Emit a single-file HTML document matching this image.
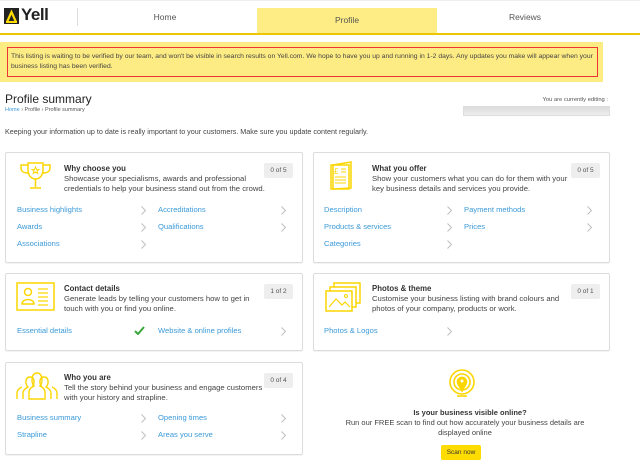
<!DOCTYPE html>
<html><head><meta charset="utf-8"><style>
*{box-sizing:border-box;margin:0;padding:0}
body{width:640px;height:466px;overflow:hidden;background:#fff;font-family:"Liberation Sans",sans-serif;color:#333;position:relative}
.a{position:absolute}
.card{position:absolute;border:1px solid #ddd;border-radius:2px;background:#fff;box-shadow:0 1px 1px rgba(0,0,0,.05)}
.t{position:absolute;left:58px;font-size:7.8px;font-weight:bold;color:#333}
.d{position:absolute;left:58px;font-size:7.7px;line-height:10px;color:#444}
.b{position:absolute;right:9px;top:10px;width:29px;height:15px;background:#eee;font-size:6.5px;color:#555;text-align:center;line-height:15px;border-radius:2px}
.l{position:absolute;font-size:7.6px;color:#3a9ad9}
.c{position:absolute;width:5px;height:9px}
</style></head><body>
<svg width="0" height="0" style="position:absolute"><defs><symbol id="ch" viewBox="0 0 5 9"><path d="M0.5 0.5L4.5 4.5L0.5 8.5" stroke="#bbb" stroke-width="0.9" fill="none"/></symbol></defs></svg>
<div class="a" style="left:0;top:0;width:640px;height:1px;background:#eee"></div>
<div class="a" style="left:4px;top:8px;width:15px;height:16px;background:#222"></div>
<svg class="a" style="left:4px;top:8px" width="15" height="16"><path d="M3 14 L7.5 4 L12 14" stroke="#ffdc00" stroke-width="2.2" fill="none"/><rect x="2" y="13" width="11" height="2" fill="#ffdc00"/></svg>
<div class="a" style="left:21px;top:5px;font-size:17px;font-weight:bold;color:#222;letter-spacing:-.5px">Yell</div>
<div class="a" style="left:77px;top:8px;width:1px;height:18px;background:#ddd"></div>
<div class="a" style="left:130px;top:12px;width:70px;text-align:center;font-size:8.5px;color:#555">Home</div>
<div class="a" style="left:257px;top:8px;width:180px;height:26px;background:#fded84"></div>
<div class="a" style="left:257px;top:15px;width:180px;text-align:center;font-size:8.5px;color:#555">Profile</div>
<div class="a" style="left:490px;top:12px;width:70px;text-align:center;font-size:8.5px;color:#555">Reviews</div>
<div class="a" style="left:0;top:33px;width:640px;height:2px;background:#ecc600"></div>
<div class="a" style="left:0;top:42px;width:603px;height:40px;background:#fdeb83"></div>
<div class="a" style="left:7px;top:47px;width:591px;height:30px;border:1px solid #e33;padding:4px 3px;font-size:6.8px;line-height:10px;color:#444">This listing is waiting to be verified by our team, and won't be visible in search results on Yell.com. We hope to have you up and running in 1-2 days. Any updates you make will appear when your business listing has been verified.</div>
<div class="a" style="left:5px;top:92px;font-size:12px;color:#222">Profile summary</div>
<div class="a" style="left:5px;top:107px;font-size:5.5px;color:#555"><span style="color:#3a9ad9">Home</span> › Profile › Profile summary</div>
<div class="a" style="right:32px;top:97px;font-size:5.8px;color:#555">You are currently editing :</div>
<div class="a" style="left:463px;top:106px;width:147px;height:10px;background:linear-gradient(#ddd,#eee);border:1px solid #ddd"></div>
<div class="a" style="left:5px;top:127px;font-size:7.2px;color:#444">Keeping your information up to date is really important to your customers. Make sure you update content regularly.</div>

<div class="card" style="left:5px;top:152px;width:298px;height:111px">
<svg class="a" style="left:13px;top:9px" width="33" height="28" fill="none" stroke="#fcd600" stroke-width="1.5"><path d="M9 1H24V8C24 14 20 17 16.5 17C13 17 9 14 9 8Z"/><path d="M9 3H2V6C2 10 6 11 9 11M24 3H31V6C31 10 27 11 24 11M16.5 17V25M11 26H22"/><path d="M16.5 5L17.5 7.5L20 7.6L18 9L18.8 11.5L16.5 10L14.2 11.5L15 9L13 7.6L15.5 7.5Z" stroke-width="1"/></svg>
<div class="t" style="top:11px">Why choose you</div>
<div class="d" style="top:21px">Showcase your specialisms, awards and professional<br>credentials to help your business stand out from the crowd.</div>
<div class="b">0 of 5</div>
<div class="l" style="left:11px;top:52px">Business highlights</div><svg class="c" style="left:135px;top:53px"><use href="#ch"/></svg>
<div class="l" style="left:152px;top:52px">Accreditations</div><svg class="c" style="left:275px;top:53px"><use href="#ch"/></svg>
<div class="l" style="left:11px;top:69px">Awards</div><svg class="c" style="left:135px;top:70px"><use href="#ch"/></svg>
<div class="l" style="left:152px;top:69px">Qualifications</div><svg class="c" style="left:275px;top:70px"><use href="#ch"/></svg>
<div class="l" style="left:11px;top:86px">Associations</div><svg class="c" style="left:135px;top:87px"><use href="#ch"/></svg>
</div>

<div class="card" style="left:313px;top:152px;width:297px;height:111px">
<svg class="a" style="left:15px;top:8px" width="28" height="30" fill="none" stroke="#fcd600" stroke-width="1.5"><path d="M4 4L22 1V27L4 28Z"/><path d="M2 4H20V28H2Z"/><path d="M6 16H17M6 19H17M6 22H17M12 8H17M12 11H17" stroke-width="1"/><text x="5" y="13" font-size="8" fill="#fcd600" stroke="none" font-family="Liberation Sans">£</text></svg>
<div class="t" style="top:11px">What you offer</div>
<div class="d" style="top:21px">Show your customers what you can do for them with your<br>key business details and services you provide.</div>
<div class="b">0 of 5</div>
<div class="l" style="left:10px;top:52px">Description</div><svg class="c" style="left:133px;top:53px"><use href="#ch"/></svg>
<div class="l" style="left:150px;top:52px">Payment methods</div><svg class="c" style="left:273px;top:53px"><use href="#ch"/></svg>
<div class="l" style="left:10px;top:69px">Products &amp; services</div><svg class="c" style="left:133px;top:70px"><use href="#ch"/></svg>
<div class="l" style="left:150px;top:69px">Prices</div><svg class="c" style="left:273px;top:70px"><use href="#ch"/></svg>
<div class="l" style="left:10px;top:86px">Categories</div><svg class="c" style="left:133px;top:87px"><use href="#ch"/></svg>
</div>

<div class="card" style="left:5px;top:273px;width:298px;height:78px">
<svg class="a" style="left:10px;top:8px" width="39" height="30" fill="none" stroke="#fcd600" stroke-width="1.5"><rect x="1" y="1" width="37" height="27"/><circle cx="12" cy="10" r="3.5"/><path d="M6 22C6 16 18 16 18 22Z"/><path d="M22 7H32M22 11H32M22 15H32M22 19H32M22 23H32" stroke-width="1.2"/></svg>
<div class="t" style="top:10px">Contact details</div>
<div class="d" style="top:20px">Generate leads by telling your customers how to get in<br>touch with you or find you online.</div>
<div class="b">1 of 2</div>
<div class="l" style="left:11px;top:52px">Essential details</div>
<svg class="a" style="left:128px;top:52px" width="11" height="9"><path d="M1 5L4 8L10 1" stroke="#3aa53a" stroke-width="2" fill="none"/></svg>
<div class="l" style="left:152px;top:52px">Website &amp; online profiles</div><svg class="c" style="left:275px;top:53px"><use href="#ch"/></svg>
</div>

<div class="card" style="left:313px;top:273px;width:297px;height:78px">
<svg class="a" style="left:11px;top:8px" width="36" height="30" fill="none" stroke="#fcd600" stroke-width="1.5"><rect x="9" y="1" width="26" height="20"/><rect x="5" y="5" width="26" height="20" fill="#fff"/><rect x="1" y="9" width="26" height="20" fill="#fff"/><path d="M4 25L11 17L17 23L20 20L25 25" stroke-width="1.2"/><circle cx="21" cy="14" r="1.5" stroke-width="1"/></svg>
<div class="t" style="top:10px">Photos &amp; theme</div>
<div class="d" style="top:20px">Customise your business listing with brand colours and<br>photos of your company, products or work.</div>
<div class="b">0 of 1</div>
<div class="l" style="left:10px;top:52px">Photos &amp; Logos</div><svg class="c" style="left:133px;top:53px"><use href="#ch"/></svg>
</div>

<div class="card" style="left:5px;top:362px;width:298px;height:93px">
<svg class="a" style="left:10px;top:8px" width="42" height="30" fill="none" stroke="#fcd600" stroke-width="1.4"><path d="M7 28V22C7 19 10 17 12 16C9 13 9 6 14 6C19 6 19 13 16 16"/><path d="M35 28V22C35 19 32 17 30 16C33 13 33 6 28 6C23 6 23 13 26 16"/><path d="M13 28V21C13 18 16 16 18 15C15 12 15 2 21 2C27 2 27 12 24 15C26 16 29 18 29 21V28Z"/><path d="M1 28V22C1 19 4 17 6 16M41 28V22C41 19 38 17 36 16"/></svg>
<div class="t" style="top:10px">Who you are</div>
<div class="d" style="top:20px">Tell the story behind your business and engage customers<br>with your history and strapline.</div>
<div class="b">0 of 4</div>
<div class="l" style="left:11px;top:50px">Business summary</div><svg class="c" style="left:135px;top:51px"><use href="#ch"/></svg>
<div class="l" style="left:152px;top:50px">Opening times</div><svg class="c" style="left:275px;top:51px"><use href="#ch"/></svg>
<div class="l" style="left:11px;top:67px">Strapline</div><svg class="c" style="left:135px;top:68px"><use href="#ch"/></svg>
<div class="l" style="left:152px;top:67px">Areas you serve</div><svg class="c" style="left:275px;top:68px"><use href="#ch"/></svg>
</div>

<svg class="a" style="left:447px;top:369px" width="30" height="30" fill="none" stroke="#fcd600" stroke-width="1.6"><circle cx="15" cy="13" r="12"/><circle cx="15" cy="13" r="8"/><path d="M15 22L11 15A4.5 4.5 0 1 1 19 15Z" fill="#fcd600"/><circle cx="15" cy="12" r="1.5" fill="#fff" stroke="none"/><path d="M10 27H20"/></svg>
<div class="a" style="left:360px;top:408px;width:220px;text-align:center;font-size:7.5px;font-weight:bold;color:#333">Is your business visible online?</div>
<div class="a" style="left:330px;top:418px;width:270px;text-align:center;font-size:7.5px;line-height:9.5px;color:#444">Run our FREE scan to find out how accurately your business details are displayed online</div>
<div class="a" style="left:441px;top:445px;width:40px;height:15px;background:#ffdc00;border-radius:2px;font-size:6.5px;text-align:center;line-height:15px;color:#333">Scan now</div>
</body></html>
